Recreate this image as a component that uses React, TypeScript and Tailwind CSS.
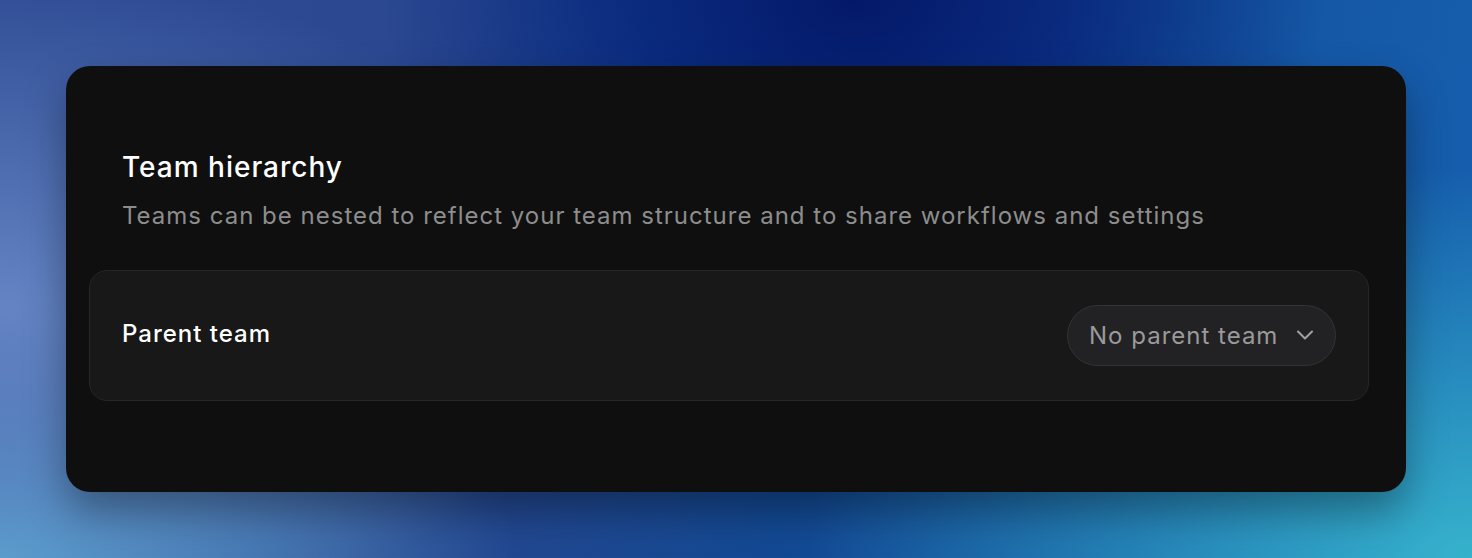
import { ChevronDown } from "lucide-react";

export default function App() {
    return (
        <div className="w-full h-[558px] p-[66px] font-['Inter',sans-serif] bg-[radial-gradient(ellipse_32%_55%_at_58%_0%,#041868_0%,#0a2a7e_45%,transparent_100%),radial-gradient(ellipse_45%_70%_at_100%_100%,#36b2cc_0%,transparent_100%),radial-gradient(ellipse_40%_60%_at_0%_55%,#6484c4_0%,transparent_100%),radial-gradient(ellipse_35%_50%_at_0%_100%,#58a4cf_0%,transparent_100%),linear-gradient(100deg,#2f4c94_0%,#2a4790_30%,#134993_55%,#1660b0_100%)]">
            {/* ── Card ── */}
            <div className="h-full rounded-[24px] bg-[#0f0f0f] shadow-[0_20px_40px_rgba(0,0,0,0.35)] pt-[83px] pl-[23px] pr-[37px]">
                <div className="pl-[33px]">
                    <h2 className="text-[28px] leading-[36px] font-medium text-white tracking-[1px]">Team hierarchy</h2>
                    <p className="mt-[15px] text-[24px] leading-[32px] text-[#8d8d8d] tracking-[1px]">
                        Teams can be nested to reflect your team structure and to share workflows and settings
                    </p>
                </div>

                {/* ── Parent team row ── */}
                <div className="mt-[38px] h-[131px] rounded-[18px] bg-[#181818] border border-[#262626] px-[32px] flex items-center justify-between">
                    <span className="text-[24px] leading-[32px] font-medium text-white tracking-[1px] -mt-1">Parent team</span>
                    <button className="h-[61px] w-[269px] rounded-full bg-[#222224] border border-[#333335] pl-[21px] pr-[16px] flex items-center justify-between">
                        <span className="text-[24px] leading-[32px] text-[#9a9a9a] tracking-[1px]">No parent team</span>
                        <ChevronDown className="w-7 h-7 text-[#a0a0a0] -mt-0.5" strokeWidth={1.8} />
                    </button>
                </div>
            </div>
        </div>
    );
}
